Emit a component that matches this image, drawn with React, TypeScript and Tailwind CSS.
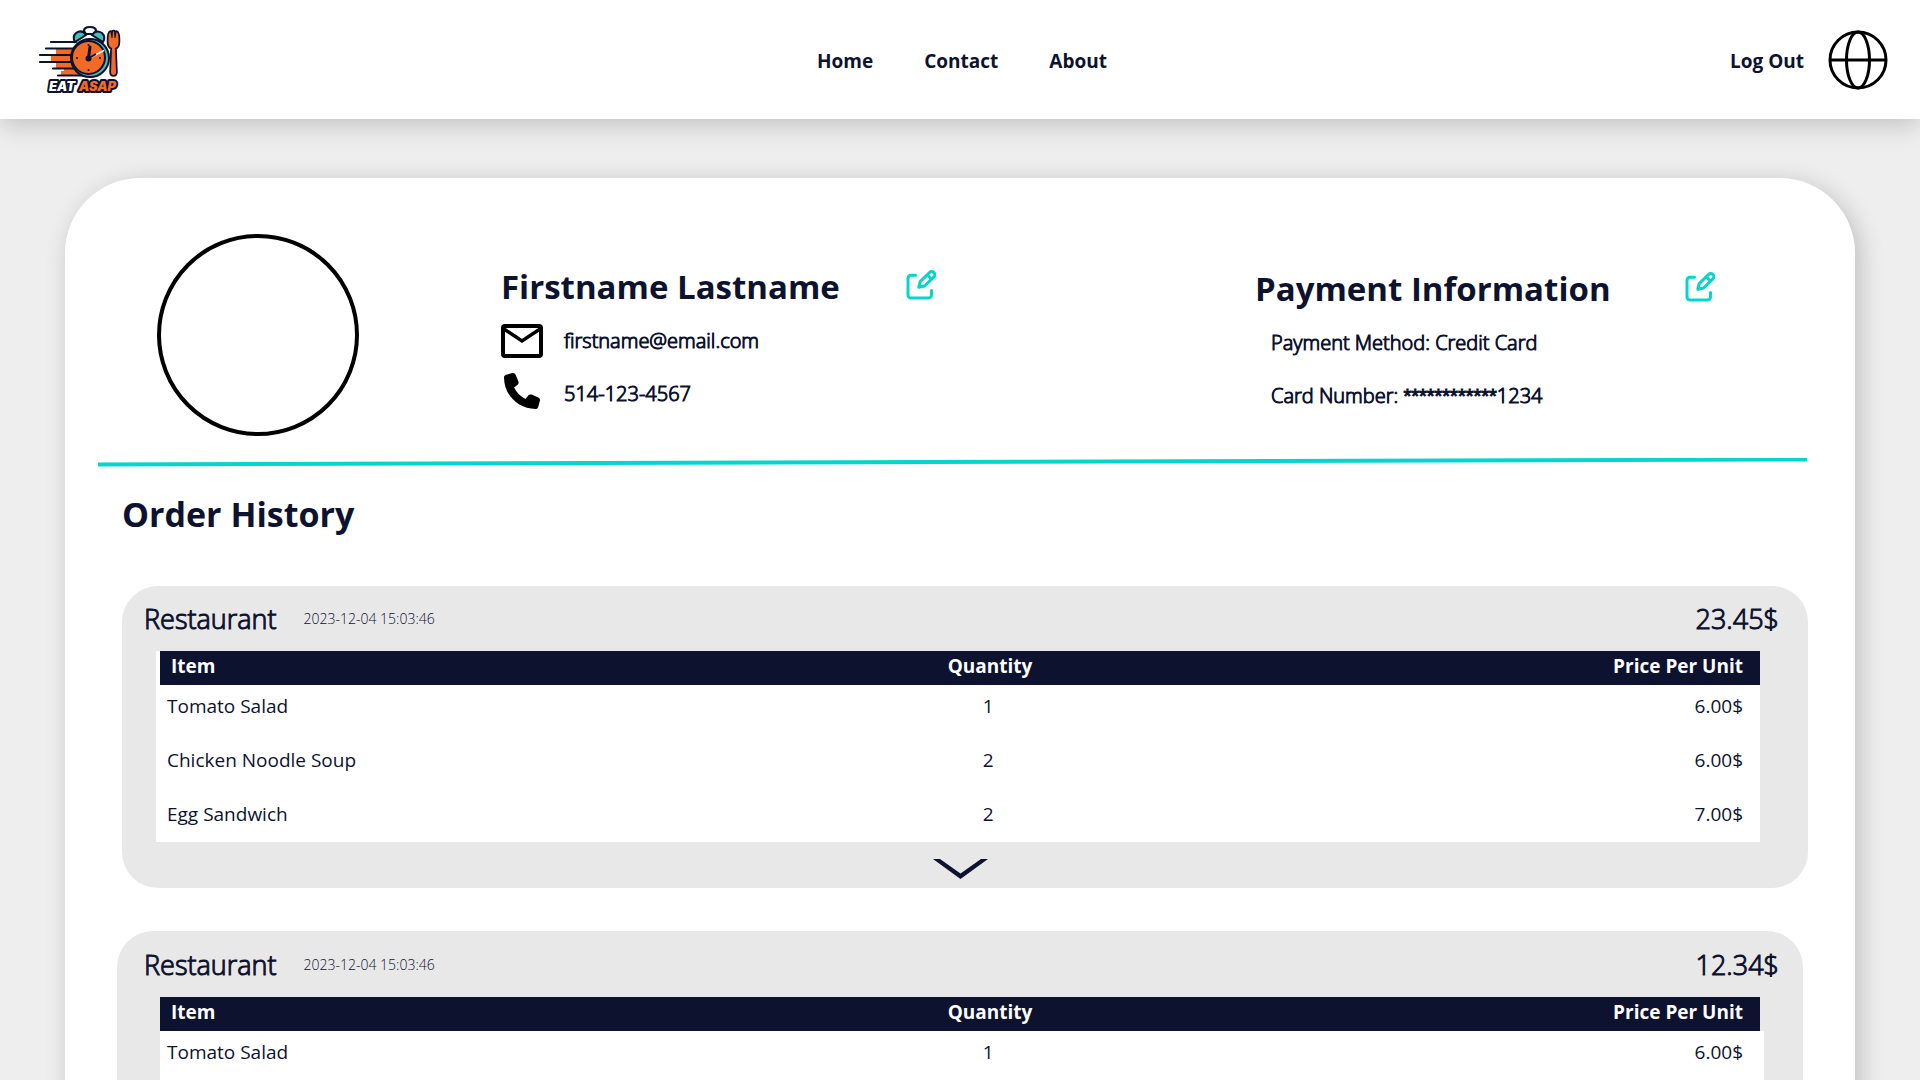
import { FaPhone } from 'react-icons/fa6';

type Item = { name: string; quantity: number; price: string };

type Order = {
  id: number;
  restaurant: string;
  date: string;
  total: string;
  items: Item[];
};

const items: Item[] = [
  { name: 'Tomato Salad', quantity: 1, price: '6.00$' },
  { name: 'Chicken Noodle Soup', quantity: 2, price: '6.00$' },
  { name: 'Egg Sandwich', quantity: 2, price: '7.00$' },
];

const orders: Order[] = [
  { id: 1, restaurant: 'Restaurant', date: '2023-12-04 15:03:46', total: '23.45$', items },
  { id: 2, restaurant: 'Restaurant', date: '2023-12-04 15:03:46', total: '12.34$', items },
];

type OrderStyle = {
  card: string;
  header: string;
  body: string;
  firstHead: string;
  middleHead: string;
  lastHead: string;
  firstCell: string;
  middleCell: string;
  lastCell: string;
};

const wideStyle: OrderStyle = {
  card: 'ml-[57px] mr-[47px]',
  header: 'h-[65px] pt-[15px] pl-[22px] pr-[29px]',
  body: 'ml-[34px] mr-[48px]',
  firstHead: 'border-l-4 border-white',
  middleHead: '',
  lastHead: '',
  firstCell: 'pl-[11px]',
  middleCell: 'pr-1',
  lastCell: 'pr-[17px]',
};

const centeredStyle: OrderStyle = {
  card: 'mx-[52px]',
  header: 'h-[66px] pt-4 pl-[27px] pr-6',
  body: 'ml-[43px] mr-[39px]',
  firstHead: '',
  middleHead: 'pr-2',
  lastHead: 'border-r-4 border-[#e8e8e8]',
  firstCell: 'pl-[7px]',
  middleCell: 'pr-3',
  lastCell: 'pr-[21px]',
};

function Logo() {
  return (
    <svg viewBox="0 0 90 76" className="h-[76px] w-[90px]" role="img" aria-label="Eat ASAP">
      <path d="M20 27H45V33H20zM15 33H45V39H15zM20 41H45V46H20zM28 46H50V50H28zM25 49H55V54H25z" fill="#f26a26" />
      <path
        d="M15 20H40M10 26.5H38M4 33H36M4 40H36M17 46.500H38M22 53.500H50"
        stroke="#0d122e"
        strokeWidth="2.2"
        strokeLinecap="round"
      />
      <path d="M48 9q0-4 6-4t6 4l-2 3h-8z" fill="#fff" stroke="#0d122e" strokeWidth="2.200" />
      <path d="M39 20q-3-5 1-9 6-4 10 2z" fill="#47bdb5" stroke="#0d122e" strokeWidth="2" />
      <path d="M67 20q3-5-1-9-6-4-10 2z" fill="#47bdb5" stroke="#0d122e" strokeWidth="2" />
      <circle cx="54" cy="36" r="19" fill="#47bdb5" stroke="#0d122e" strokeWidth="2" />
      <circle cx="52.500" cy="35.500" r="16.500" fill="#f26a26" stroke="#0d122e" strokeWidth="2" />
      <path d="M52.500 36.500L68 28.500" stroke="#fff" strokeWidth="1.500" />
      <path d="M52.500 36L54 25" stroke="#0d122e" strokeWidth="3" strokeLinecap="round" />
      <path d="M53 36L60 32" stroke="#0d122e" strokeWidth="2" />
      <circle cx="52.500" cy="36.500" r="3" fill="#0d122e" />
      <g fill="#0d122e">
        <circle cx="52.500" cy="23" r="1" />
        <circle cx="41" cy="36" r="1" />
        <circle cx="64" cy="36" r="1" />
        <circle cx="52.500" cy="48" r="1" />
      </g>
      <path
        d="M72.500 17q0-6 2-7l1 6h1l.5-6.500h1l.5 6.500h1l1-6q2 1 2 7v3q0 5-3.500 6l1 24q0 3-2.500 3t-2.500-3l1-24q-3.500-1-3.500-6z"
        fill="#f26a26"
        stroke="#0d122e"
        strokeWidth="3.500"
        strokeLinejoin="round"
        style={{ paintOrder: 'stroke' }}
      />
      <text
        y="69"
        fontFamily="Inter, sans-serif"
        fontWeight="900"
        fontStyle="italic"
        fontSize="13"
        stroke="#0d122e"
        strokeWidth="4"
        strokeLinejoin="round"
        style={{ paintOrder: 'stroke' }}
      >
        <tspan x="13" fill="#fff">EAT</tspan>
        <tspan x="43" fill="#f26a26">ASAP</tspan>
      </text>
    </svg>
  );
}

function GlobeIcon() {
  return (
    <svg viewBox="0 0 60 60" className="size-[60px]" fill="none" stroke="#000" strokeWidth="3" aria-hidden="true">
      <circle cx="30" cy="30" r="28" />
      <ellipse cx="30" cy="30" rx="11.500" ry="28" />
      <path d="M2 30H58" />
    </svg>
  );
}

function EditButton({ label }: { label: string }) {
  return (
    <button type="button" aria-label={label} className="cursor-pointer pt-[3px]">
      <svg
        viewBox="6 6 30 30"
        className="size-[30px]"
        fill="none"
        stroke="#05d5ca"
        strokeWidth="3"
        strokeLinecap="round"
        strokeLinejoin="round"
        aria-hidden="true"
      >
        <path d="M15.500 11.300H11a3 3 0 0 0-3 3V31a3 3 0 0 0 3 3H28.500a3 3 0 0 0 3-3V26.500" />
        <path d="M18.800 23.200L20.200 17.600L29.500 8.500a3.100 3.100 0 0 1 4.400 4.400L24.600 22z" />
        <path d="M27.500 11L31.200 14.700" />
      </svg>
    </button>
  );
}

function MailIcon() {
  return (
    <svg viewBox="0 0 42 34" className="h-[34px] w-[42px]" fill="none" stroke="#000" strokeWidth="4" aria-hidden="true">
      <rect x="2" y="2" width="38" height="30" rx="2" />
      <path d="M3 5L21 17L39 5" strokeWidth="3.500" />
    </svg>
  );
}

function OrderCard({ order, look }: { order: Order; look: OrderStyle }) {
  return (
    <article className={`rounded-[36px] bg-[#e8e8e8] ${look.card}`}>
      <header className={`flex items-start leading-9 ${look.header}`}>
        <h3 className="text-[27px] font-light [-webkit-text-stroke:1px_#0d122e]">{order.restaurant}</h3>
        <time className="ml-[27px] text-[14px] leading-9 font-light">{order.date}</time>
        <p className="ml-auto text-[27px] font-light [-webkit-text-stroke:1px_#0d122e]">{order.total}</p>
      </header>
      <div className={look.body}>
        <table className="w-full table-fixed border-separate border-spacing-0 bg-white text-[19px] leading-7">
          <thead>
            <tr className="h-[34px] bg-[#0d122e] text-white">
              <th scope="col" className={`w-[40%] pb-1 pl-[11px] text-left font-bold ${look.firstHead}`}>Item</th>
              <th scope="col" className={`w-[24%] pb-1 text-center font-bold ${look.middleHead}`}>Quantity</th>
              <th scope="col" className={`pr-[17px] pb-1 text-right font-bold ${look.lastHead}`}>Price Per Unit</th>
            </tr>
          </thead>
          <tbody>
            {order.items.map((item) => (
              <tr key={item.name} className="h-[54px] align-top last:h-[49px]">
                <td className={`pt-[7px] ${look.firstCell}`}>{item.name}</td>
                <td className={`pt-[7px] text-center ${look.middleCell}`}>{item.quantity}</td>
                <td className={`pt-[7px] text-right ${look.lastCell}`}>{item.price}</td>
              </tr>
            ))}
          </tbody>
        </table>
      </div>
      <div className="flex h-[46px] justify-center pt-[17px] pr-2">
        <button type="button" aria-label="Show more items" className="h-5 cursor-pointer">
          <svg viewBox="0 0 56 20" className="h-5 w-14" aria-hidden="true">
            <path d="M0 0H7L27.500 14.500L48 0H55L27.500 20z" fill="#0d122e" />
          </svg>
        </button>
      </div>
    </article>
  );
}

export default function App() {
  return (
    <div className="h-screen overflow-x-hidden overflow-y-auto bg-[#eee] font-['Open_Sans',sans-serif] text-[#0d122e] [scrollbar-width:none]">
      <header className="relative grid h-[119px] grid-cols-[1fr_auto_1fr] items-center bg-white pr-8 pl-9 shadow-[0_5px_25px_rgba(0,0,0,0.2)]">
        <a href="#home" className="justify-self-start">
          <Logo />
        </a>
        <nav className="flex gap-[51px] pt-1 text-[19px] font-bold">
          <a href="#home">Home</a>
          <a href="#contact">Contact</a>
          <a href="#about">About</a>
        </nav>
        <div className="flex items-center gap-6 justify-self-end text-[19px] font-bold">
          <a href="#logout" className="pt-1">Log Out</a>
          <button type="button" aria-label="Change language" className="cursor-pointer">
            <GlobeIcon />
          </button>
        </div>
      </header>

      <main className="mx-[65px] mt-[59px] rounded-t-[75px] bg-white pt-14 pb-14 shadow-[5px_5px_25px_rgba(0,0,0,0.2)]">
        <section className="mr-12 ml-[92px] flex">
          <div className="size-[202px] shrink-0 rounded-full border-4 border-black" />
          <div className="ml-[142px] pt-[33px]">
            <div className="mb-[7px] flex w-[435px] items-start justify-between">
              <h1 className="text-[33px] leading-10 font-bold">Firstname Lastname</h1>
              <EditButton label="Edit profile" />
            </div>
            <p className="flex h-[53px] items-center gap-[21px] text-[20px] font-light [-webkit-text-stroke:1px_#0d122e]">
              <MailIcon />
              firstname@email.com
            </p>
            <p className="flex h-[53px] items-center gap-[21px] text-[20px] font-light [-webkit-text-stroke:1px_#0d122e]">
              <span className="flex w-[42px] justify-center pb-[6px]">
                <FaPhone className="size-9 text-black" />
              </span>
              514-123-4567
            </p>
          </div>
          <div className="ml-auto w-[552px] pt-[35px]">
            <div className="mb-[7px] flex w-[460px] items-start justify-between">
              <h2 className="text-[33px] leading-10 font-bold">Payment Information</h2>
              <EditButton label="Edit payment information" />
            </div>
            <p className="flex h-[53px] items-center pl-4 text-[20px] font-light [-webkit-text-stroke:1px_#0d122e]">
              Payment Method: Credit Card
            </p>
            <p className="h-[53px] pl-4 text-[20px] leading-[53px] font-light [-webkit-text-stroke:1px_#0d122e]">
              Card Number: <span className="font-['Liberation_Sans',sans-serif]">************</span>1234
            </p>
          </div>
        </section>

        <div className="mt-[22px] mr-12 ml-[33px]">
          <svg viewBox="0 0 1709 10" preserveAspectRatio="none" className="block h-[10px] w-full" aria-hidden="true">
            <path d="M0 6.500L1709 1.500" stroke="#05d5ca" strokeWidth="4" />
          </svg>
        </div>

        <h2 className="mt-6 ml-[57px] text-[34px] leading-[44px] font-bold">Order History</h2>
        <section className="mt-[50px] flex flex-col gap-[43px]">
          <OrderCard order={orders[0]} look={wideStyle} />
          <OrderCard order={orders[1]} look={centeredStyle} />
        </section>
      </main>
    </div>
  );
}
